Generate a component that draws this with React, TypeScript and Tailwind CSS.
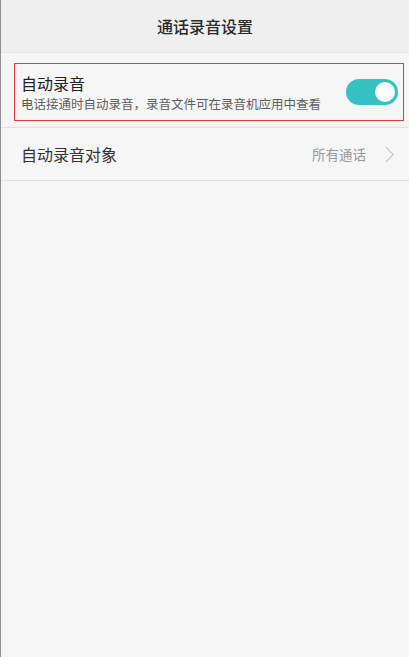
export default function App() {
  return (
    <div
      className="h-[657px] w-[409px] border-l border-[#8e8e8e] bg-[#f6f6f6] text-[#333]"
      style={{ fontFamily: '"Noto Sans CJK SC", "Noto Sans", sans-serif' }}
    >
      <div className="flex h-[53px] items-center justify-center border-b border-[#e6e6e6] bg-[#efefef]">
        <h1 className="text-[16px] font-medium text-[#2a2a2a]">通话录音设置</h1>
      </div>

      <div className="border-b border-[#e2e2e2] pb-[6px] pl-[13px] pr-[5px] pt-[10px]">
        <div className="flex h-[58px] items-center justify-between border border-[#e8383d] pl-[6px] pr-[5px]">
          <div>
            <p className="text-[16px] leading-[20px] text-[#222]">自动录音</p>
            <p className="mt-[3px] text-[12.5px] leading-[16px] text-[#5e5e5e]">
              电话接通时自动录音，录音文件可在录音机应用中查看
            </p>
          </div>
          <div className="flex h-[26px] w-[52px] items-center justify-end rounded-full bg-[#36c1c5] pr-[3px]">
            <div className="h-[20px] w-[20px] rounded-full bg-white" />
          </div>
        </div>
      </div>

      <div className="flex h-[53px] items-center justify-between border-b border-[#e2e2e2] pl-[20px] pr-[15px]">
        <span className="text-[16px] text-[#333]">自动录音对象</span>
        <div className="flex items-center gap-[19px]">
          <span className="text-[13.5px] text-[#999]">所有通话</span>
          <svg width="9" height="17" viewBox="0 0 9 17" fill="none">
            <path d="M0.8 0.8l7.4 7.7-7.4 7.7" stroke="#c4c4c4" strokeWidth="1.1" />
          </svg>
        </div>
      </div>
    </div>
  )
}
